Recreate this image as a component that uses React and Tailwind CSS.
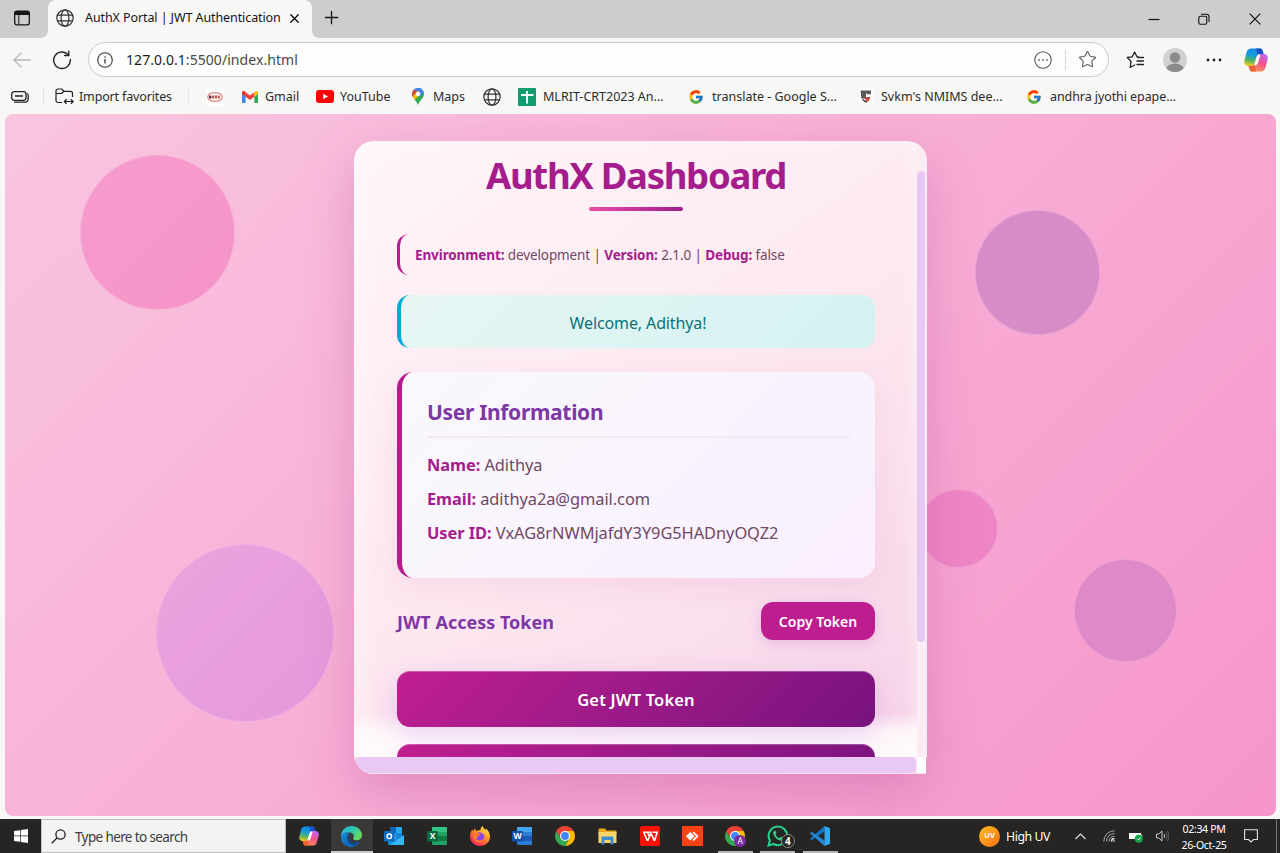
import React from "react";
import { Star, X, Plus } from "lucide-react";
import { FcGoogle } from "react-icons/fc";

/* ---------- icons ---------- */

function GlobeIcon() {
  return (
    <svg viewBox="0 0 18 18" className="size-[18px] shrink-0" fill="none" stroke="#333" strokeWidth="1.200">
      <circle cx="9" cy="9" r="8.200" />
      <ellipse cx="9" cy="9" rx="3.900" ry="8.200" />
      <path d="M1.400 6.200h15.200M1.400 11.800h15.200" />
    </svg>
  );
}

function ReloadIcon() {
  return (
    <svg viewBox="0 0 20 20" className="ml-[21px] size-[20px]" fill="none" stroke="#242424" strokeWidth="1.400" strokeLinecap="round" strokeLinejoin="round">
      <path d="M18.300 9.500A8.300 8.300 0 1 1 16.300 4.800" />
      <path d="M16.800 1.200v4.300h-4.300" />
    </svg>
  );
}

function CopilotIcon({ className }) {
  return (
    <svg viewBox="0 0 24 24" className={className}>
      <defs>
        <linearGradient id="cpA" x1="0.5" y1="0" x2="0.3" y2="1">
          <stop offset="0" stopColor="#1488ee" />
          <stop offset="0.4" stopColor="#159fd8" />
          <stop offset="0.7" stopColor="#5bb55d" />
          <stop offset="1" stopColor="#f2cc1c" />
        </linearGradient>
        <linearGradient id="cpB" x1="0.7" y1="0" x2="0.3" y2="1">
          <stop offset="0" stopColor="#c068f0" />
          <stop offset="0.45" stopColor="#f0508c" />
          <stop offset="1" stopColor="#ff9850" />
        </linearGradient>
      </defs>
      <path d="M12.500 .5h3.600c1.300 0 2 .8 2.400 2L19.500 6h-3c-1.500 0-2.300.8-2.800 2.300L11.500 15.500c-.5 1.600-1.300 2.500-3 2.500H4.500C1.300 18-.3 15.800.4 12.700L2.500 4.500C3.300 1.800 4.700.5 7.300.5z" fill="url(#cpA)" />
      <path d="M12 .5h4.200c1.300 0 2 .8 2.400 2l1 3.500H16c-1.200 0-1.700.5-2.300 1.600z" fill="#1c51c9" />
      <path d="M11.500 23.500H8c-1.300 0-2-.8-2.400-2L4.500 18h3.300c1.500 0 2.400-.8 2.900-2.300L12.900 8.500c.5-1.600 1.300-2.500 3-2.500h3.700c3.200 0 4.700 2.200 4 5.300l-2.100 8.200c-.8 2.700-2.200 4-4.800 4z" fill="url(#cpB)" />
      <path d="M12 23.500H8c-1.300 0-2-.8-2.400-2L4.500 18h3.300c1.500 0 2.400-.8 2.900-2.300z" fill="#f2603c" />
      <path d="M13.300 8.200c.3-.9.7-1.200 1.500-1.200h.9c-.6 3-1.600 6.300-2.600 8.800-.3.900-.8 1.200-1.600 1.200h-1z" fill="#fff" stroke="#fff" strokeWidth="1" strokeLinejoin="round" />
    </svg>
  );
}

function GmailIcon() {
  return (
    <svg viewBox="0 0 16 12" className="h-[12px] w-[16px]">
      <path d="M0 2.500V11c0 .6.400 1 1 1h2.600V5.400z" fill="#4285f4" />
      <path d="M16 2.500V11c0 .6-.4 1-1 1h-2.600V5.400z" fill="#34a853" />
      <path d="M3.600 1.200 8 4.500l4.400-3.300v4.600L8 9.100 3.600 5.800z" fill="#ea4335" />
      <path d="M12.400 1.200v4.600L16 3.100V1.900c0-1.700-1.800-2.500-3-1.500z" fill="#fbbc04" />
      <path d="M3.600 1.200v4.600L0 3.100V1.900C0 .2 1.800-.6 3 .4z" fill="#dc3226" />
    </svg>
  );
}

function YouTubeIcon() {
  return (
    <svg viewBox="0 0 18 13" className="h-[13px] w-[18px]">
      <rect width="18" height="13" rx="3" fill="#f00" />
      <path d="M7.200 3.700v5.600L12 6.500z" fill="#fff" />
    </svg>
  );
}

function MapsIcon() {
  return (
    <svg viewBox="0 0 12 17" className="h-[17px] w-[12px]">
      <path d="M6 0a6 6 0 0 0-6 6c0 4 4 5.500 6 11 2-5.500 6-7 6-11a6 6 0 0 0-6-6z" fill="#34a853" />
      <path d="M6 0a6 6 0 0 0-4.600 2.200L6 6 9.900.9A6 6 0 0 0 6 0z" fill="#4285f4" />
      <path d="M1.400 2.200A6 6 0 0 0 0 6c0 1 .2 1.800.6 2.500L6 2.900z" fill="#ea4335" />
      <path d="M.6 8.500C1 9.700 1.900 10.600 2.800 11.700L9 5 6 3z" fill="#fbbc04" />
      <path d="M9.900 1.400 5 7l3 1.500 3.800-4.300A6 6 0 0 0 9.900 1.400z" fill="#4285f4" />
      <circle cx="6" cy="6" r="2.200" fill="#fff" />
    </svg>
  );
}

function BadgeIcon() {
  return (
    <svg viewBox="0 0 18 18" className="size-[18px]">
      <rect width="18" height="18" rx="2" fill="#fff" />
      <ellipse cx="9" cy="9" rx="7.300" ry="4.400" fill="#fff" stroke="#e08a85" strokeWidth="1.300" />
      <path d="M3 9h11.500" stroke="#d8554f" strokeWidth="3" strokeDasharray="2.200 .7" />
      <circle cx="4.200" cy="9" r="1.300" fill="#453a5c" />
    </svg>
  );
}

function SheetsIcon() {
  return (
    <svg viewBox="0 0 18 18" className="size-[18px]">
      <rect width="18" height="18" rx="1" fill="#0f9d6b" />
      <path d="M9 3v12.500M3 7h12.500" stroke="#fff" strokeWidth="2" />
    </svg>
  );
}

function NmimsIcon() {
  return (
    <svg viewBox="0 0 14 15" className="h-[15px] w-[14px]">
      <rect width="14" height="15" rx="2" fill="#fff" />
      <path d="M1.500 1.500h10.500v3.800H8V4.500H7V8h4v1.500H2.300z" fill="#58595b" />
      <path d="M4.500 8.500H11c0 2.500-1.500 4-4 5.200V11z" fill="#d8453f" />
      <path d="M3 9.500l5 3.200-1 .9c-2-.6-3.700-2-4-4.100z" fill="#333" />
    </svg>
  );
}

function EdgeIcon() {
  return (
    <svg viewBox="0 0 24 24" className="size-[21px]">
      <defs>
        <linearGradient id="edA" x1="0" y1="0" x2="1" y2="0.5">
          <stop offset="0" stopColor="#2bb5e8" />
          <stop offset="0.55" stopColor="#2cc6b0" />
          <stop offset="1" stopColor="#66d85f" />
        </linearGradient>
        <linearGradient id="edB" x1="0" y1="0" x2="0.6" y2="1">
          <stop offset="0" stopColor="#1c91df" />
          <stop offset="1" stopColor="#0c5cab" />
        </linearGradient>
      </defs>
      <path d="M0 12C0 5 5.200 0 12 0s12 5.200 12 10.300c0 4-3 6-6.300 6-2.600 0-4-1.200-4-2 0-.6 1-1.100 1-3 0-2.200-2-4-4.900-4C5 7.300 0 10 0 14z" fill="url(#edA)" />
      <path d="M0 13c0-4.500 4-6.600 8.500-5.700C5.500 8.600 4.500 19.600 13 23.900 5.500 24.500 0 19.500 0 13z" fill="url(#edB)" />
      <path d="M9.800 8.200C4.500 12 7 22 14.500 22c3 0 5.500-1.400 7.600-4.200-1.900 3.900-5.700 6.200-9.600 6.200C6 23.500 2.500 13 8.700 8z" fill="#1577c8" />
      <path d="M9.700 9.500C6.500 16 13 21 20 17.800c1.200-.5 2.300-.5 1.700.6C17.500 24.500 10 23.500 7.500 18 6.200 15 7.300 11.200 9.700 9.500z" fill="#114a8b" />
    </svg>
  );
}

function OfficeIcon({ letter, back, mid, light, dark }) {
  return (
    <svg viewBox="0 0 20 18" className="h-[18px] w-[20px]">
      <rect x="5" y="0" width="15" height="18" rx="1.300" fill={back} />
      <rect x="5" y="0" width="15" height="5" rx="1" fill={light} />
      <rect x="5" y="9" width="15" height="5" fill={mid} />
      <rect x="0" y="4" width="11" height="10.500" rx="1" fill={dark} />
      <text x="5.500" y="12.300" textAnchor="middle" fontSize="8.500" fontWeight="700" fill="#fff" fontFamily="Open Sans, sans-serif">{letter}</text>
    </svg>
  );
}

function OutlookIcon() {
  return (
    <svg viewBox="0 0 20 18" className="h-[18px] w-[20px]">
      <rect x="6" y="0" width="12" height="13" rx="1" fill="#28a8ea" />
      <path d="M6 0h6v6H6z" fill="#0364b8" />
      <path d="M12 6h6v6h-6z" fill="#1a84d4" />
      <path d="M4 8l8 5 8-5v9c0 .6-.4 1-1 1H5c-.6 0-1-.4-1-1z" fill="#1490df" />
      <path d="M20 8v9c0 .6-.4 1-1 1H6z" fill="#36b7f2" />
      <rect x="0" y="4" width="10.500" height="10.500" rx="1" fill="#0f6cbd" />
      <circle cx="5.300" cy="9.300" r="2.300" fill="none" stroke="#fff" strokeWidth="1.400" />
    </svg>
  );
}

function FirefoxIcon() {
  return (
    <svg viewBox="0 0 20 20" className="size-[20px]">
      <defs>
        <linearGradient id="ffx" x1="0.85" y1="0.05" x2="0.2" y2="1">
          <stop offset="0" stopColor="#ffe84a" />
          <stop offset="0.4" stopColor="#ff9a28" />
          <stop offset="0.75" stopColor="#ff4640" />
          <stop offset="1" stopColor="#e3246c" />
        </linearGradient>
      </defs>
      <path d="M12.800 0c.2 2 1.700 3 3 4 .1-.8 0-1.300-.2-1.800C18.400 4 20 7.500 20 10.500 20 16 15.500 20 10 20S0 15.800 0 10.500C0 7.500 1 5.300 2.500 3.500l.7 2 1.600-3 1.500 2.400c1.500-.8 3-.7 4.200-.6C10.300 2.500 11.300.9 12.800 0z" fill="url(#ffx)" />
      <circle cx="9.800" cy="10.800" r="4.500" fill="#8a45e8" />
      <path d="M4 7.500c1.500-1.300 3.500-1 4.300 0l2.700.3c-.3 1.400-2 1.500-3 2 0 1.500-.8 2.200-2 2.500C7 15 11 15.500 14 12.500c-.7 3.500-4.500 4.800-7.500 3.300C3.500 14.500 2.500 10.500 4 7.500z" fill="#ff7b2e" />
      <path d="M9.500 5.500c3-1 5.700 1.300 6 4.500L13 7.500z" fill="#ffb82e" />
    </svg>
  );
}

function ChromeIcon() {
  return (
    <svg viewBox="0 0 20 20" className="size-[20px]">
      <path d="M10 5h8.660A10 10 0 0 1 10 20l4.330-7.500z" fill="#fbbc04" />
      <path d="M14.330 12.500 10 20A10 10 0 0 1 1.340 5l4.330 7.500z" fill="#34a853" />
      <path d="M5.670 12.500 1.340 5A10 10 0 0 1 18.660 5H10z" fill="#ea4335" />
      <circle cx="10" cy="10" r="5" fill="#fff" />
      <circle cx="10" cy="10" r="3.900" fill="#4285f4" />
    </svg>
  );
}

function FolderIcon() {
  return (
    <svg viewBox="0 0 19 17" className="h-[17px] w-[19px]">
      <path d="M.5 1.500C.5.900.9.5 1.500.5H7l1.500 2h9c.6 0 1 .4 1 1V6H.5z" fill="#e8a91c" />
      <path d="M.5 4h18v11H.5z" fill="#fbd568" />
      <path d="M3.500 16.500V9.500c0-.6.400-1 1-1h10c.6 0 1 .4 1 1v7h-3v-4.500h-6v4.500z" fill="#3b8ed4" />
    </svg>
  );
}

function WpsIcon() {
  return (
    <svg viewBox="0 0 20 20" className="size-[20px]">
      <rect width="20" height="20" rx="2" fill="#fb1207" />
      <path d="M3 6.200h8M3.700 6.200l3.500 8h.8l3-7.200 3 7.200h.7l2.500-8H12.500M7.500 6.200l2 4.500" fill="none" stroke="#fff" strokeWidth="1.600" />
    </svg>
  );
}

function AnyDeskIcon() {
  return (
    <svg viewBox="0 0 21 20" className="h-[20px] w-[21px]">
      <rect width="21" height="20" fill="#fb4216" />
      <path d="M4 10.300 8.200 6l4.200 4.300-4.200 4.200z" fill="#fff" />
      <path d="M11 6.200l4.300 4.100-4.300 4.200" fill="none" stroke="#fff" strokeWidth="1.800" />
    </svg>
  );
}

function WhatsAppIcon() {
  return (
    <svg viewBox="0 0 22 22" className="size-[22px]">
      <path d="M1.500 20.500l1.400-5A9.300 9.300 0 1 1 6.500 19z" fill="none" stroke="#25d38a" strokeWidth="2" />
      <path d="M7.500 5.800c-.8.400-1.400 1.300-1.200 2.600.5 3.200 4 6.700 7.300 7 1.300.1 2.500-.8 2.700-2.200l-2.600-1.400-1.300 1.400c-1.800-.6-3.200-2-3.900-3.700l1-1.200-1.100-2.500z" fill="#25d38a" />
    </svg>
  );
}

function VsCodeIcon() {
  return (
    <svg viewBox="0 0 20 20" className="size-[20px]">
      <path d="M1.500 14.200 0 12.800 14.500 0v5.500z" fill="#1076c0" />
      <path d="M1.500 5.800 0 7.200 14.500 20v-5.500z" fill="#2189d6" />
      <path d="M14.500 0 20 2.300v15.400L14.500 20z" fill="#31a8f2" />
    </svg>
  );
}

/* ---------- browser chrome ---------- */

function TabStrip() {
  return (
    <div className="flex h-[38px] items-end bg-[#cdcdcb]">
      <div className="flex h-full w-[48px] shrink-0 items-center justify-center rounded-br-lg pr-1">
        <svg viewBox="0 0 16 16" className="mt-[-2px] size-4">
          <rect x="0.700" y="1.200" width="14.600" height="13.600" rx="2" fill="none" stroke="#161616" strokeWidth="1.300" />
          <path d="M.7 2.800C.7 1.900 1.400 1 2.500 1h11c1.100 0 1.800.9 1.800 1.800V5H.7z" fill="#161616" />
          <path d="M4.800 5v9.500" stroke="#161616" strokeWidth="1" />
        </svg>
      </div>
      <div className="-ml-2 flex h-full items-end">
        <svg viewBox="0 0 8 8" className="size-2"><path d="M8 0v8H0c5 0 8-3 8-8z" fill="#f7f7f6" /></svg>
      </div>
      <div className="flex h-full w-[264px] items-center rounded-t-lg bg-[#f7f7f6] pb-[2px] pl-2">
        <GlobeIcon />
        <span className="ml-[11px] w-[198px] whitespace-nowrap text-[12.500px] tracking-[-0.090px] text-[#151515]">AuthX Portal | JWT Authentication</span>
        <X className="ml-[4px] size-[15px] text-black" strokeWidth={2} />
      </div>
      <svg viewBox="0 0 8 8" className="size-2"><path d="M0 0v8h8C3 8 0 5 0 0z" fill="#f7f7f6" /></svg>
      <div className="flex h-full grow items-center pb-[3px]">
        <Plus className="ml-[1px] size-[21px] text-[#161616]" strokeWidth={1.500} />
        <svg viewBox="0 0 12 12" className="ml-auto mt-[2px] size-3"><path d="M.5 6.500h11" stroke="#111" strokeWidth="1.200" /></svg>
        <svg viewBox="0 0 12 12" className="ml-[38px] mt-[2px] size-3" fill="none" stroke="#111" strokeWidth="1.100">
          <rect x="0.800" y="3.200" width="8" height="8" rx="1.500" />
          <path d="M3 1.200h5.500c1.600 0 2.500.9 2.500 2.500V9" />
        </svg>
        <svg viewBox="0 0 12 12" className="ml-[39px] mr-[19px] mt-[2px] size-3"><path d="M.7.7l10.600 10.600M11.300.7.700 11.300" stroke="#111" strokeWidth="1.200" /></svg>
      </div>
    </div>
  );
}

function AddressBar() {
  return (
    <div className="flex h-[41px] items-center bg-[#f7f7f6] pt-[2px]">
      <svg viewBox="0 0 18 16" className="ml-[13px] h-4 w-[18px]" fill="none" stroke="#b9b9b8" strokeWidth="1.300">
        <path d="M8.500.7 1 8l7.500 7.300M1 8h16.800" />
      </svg>
      <ReloadIcon />
      <div className="ml-[16px] flex h-[35px] w-[1021px] items-center rounded-full border border-[#cbcbc9] bg-[#fdfdfc] pl-[8px]">
        <svg viewBox="0 0 16 16" className="size-4" fill="none" stroke="#3b3b3b" strokeWidth="1.100">
          <circle cx="8" cy="8" r="7.300" />
          <path d="M8 7v4.500M8 4.300v1.500" strokeWidth="1.300" />
        </svg>
        <span className="ml-[13px] text-[14px] tracking-[0.060px] text-[#4a4a4a]"><span className="text-[#1d1d1d]">127.0.0.1</span>:5500/index.html</span>
        <svg viewBox="0 0 18 18" className="ml-auto size-[18px]">
          <circle cx="9" cy="9" r="8.200" fill="none" stroke="#555" strokeWidth="1.100" />
          <path d="M4.300 8.300h1.600v1.500H4.300zM8.200 8.300h1.600v1.500H8.200zM12.100 8.300h1.600v1.500h-1.600z" fill="#555" />
        </svg>
        <div className="ml-[13px] h-5 w-px bg-[#d5d5d3]" />
        <Star className="ml-[12px] mr-[11px] size-[19px] text-[#5a5a5a]" strokeWidth={1.350} />
      </div>
      <svg viewBox="0 0 20 18" className="ml-[17px] h-[18px] w-[20px]" fill="none" stroke="#222" strokeWidth="1.300" strokeLinejoin="round" strokeLinecap="round">
        <path d="M12.200 6 11 5.700 8.600 1 6.300 5.800 1.200 6.500 5 10.300 4.200 16.500 8.700 14" />
        <path d="M12 6.500h5.500M11 10h6.500M11 13.500h6.500" />
      </svg>
      <svg viewBox="0 0 24 24" className="ml-[17px] size-6">
        <clipPath id="av"><circle cx="12" cy="12" r="12" /></clipPath>
        <g clipPath="url(#av)">
          <rect width="24" height="24" fill="#d2d1cf" />
          <circle cx="12" cy="9.500" r="5.200" fill="#8d8b89" />
          <ellipse cx="12" cy="21.500" rx="9" ry="6" fill="#8d8b89" />
        </g>
      </svg>
      <svg viewBox="0 0 16 4" className="ml-[19px] h-1 w-4" fill="#222">
        <circle cx="2" cy="2" r="1.400" /><circle cx="8" cy="2" r="1.400" /><circle cx="14" cy="2" r="1.400" />
      </svg>
      <CopilotIcon className="ml-[22px] size-[24px]" />
    </div>
  );
}

function Bookmarks() {
  return (
    <div className="flex h-[35px] items-center bg-[#f7f7f6] text-[12.500px] text-[#2b2b2b] [&>span]:mt-[2px] [&>span]:whitespace-nowrap">
      <svg viewBox="0 0 18 12" className="ml-[11px] h-3 w-[18px]" fill="none" stroke="#222" strokeWidth="1.300">
        <rect x="0.700" y="0.700" width="14.300" height="8.600" rx="2.500" />
        <path d="M4 5h8M3 11.200h10.500c2.500 0 3.700-1.300 3.700-3.500V4.500c0-1-.4-1.700-1-2" />
      </svg>
      <div className="ml-[14px] h-[17px] w-px bg-[#e2e2e0]" />
      <svg viewBox="0 0 19 17" className="ml-[11px] h-[17px] w-[19px]" fill="none" stroke="#222" strokeWidth="1.200" strokeLinejoin="round">
        <path d="M7 14.500H3A2 2 0 0 1 1 12.500V3a2 2 0 0 1 2-2h3.500L9 3.300h6.500A2 2 0 0 1 17.500 5.300V9M1 5.500h5.500L9 3.300" />
        <path d="M9.500 13.500h8.500M11.700 11.200 9.300 13.500l2.400 2.300M15.800 11.200l2.400 2.300-2.400 2.300" />
      </svg>
      <span className="ml-[5px] w-[93px] tracking-[-0.150px]">Import favorites</span>
      <div className="ml-[16px] h-[17px] w-px bg-[#e8e8e6]" />
      <div className="ml-[17px]"><BadgeIcon /></div>
      <div className="ml-[18px]"><GmailIcon /></div>
      <span className="ml-[7px] w-[35px]">Gmail</span>
      <div className="ml-[16px]"><YouTubeIcon /></div>
      <span className="ml-[6px] w-[52px]">YouTube</span>
      <div className="ml-[20px]"><MapsIcon /></div>
      <span className="ml-[9px] w-[32px]">Maps</span>
      <div className="ml-[18px]"><GlobeIcon /></div>
      <div className="ml-[17px]"><SheetsIcon /></div>
      <span className="ml-[7px] w-[122px]">MLRIT-CRT2023 An...</span>
      <FcGoogle className="ml-[23px] size-[16px]" />
      <span className="ml-[8px] w-[125px]">translate - Google S...</span>
      <div className="ml-[22px]"><NmimsIcon /></div>
      <span className="ml-[8px] w-[122px]">Svkm's NMIMS dee...</span>
      <FcGoogle className="ml-[23px] size-[16px]" />
      <span className="ml-[8px] w-[130px] tracking-[-0.080px]">andhra jyothi epape...</span>
    </div>
  );
}

/* ---------- page ---------- */

function Bubble({ className }) {
  return <div className={"absolute rounded-full border border-white/20 " + className} />;
}

function Label({ children }) {
  return <b className="font-bold text-[#a51c8c]">{children}</b>;
}

function Dashboard() {
  return (
    <div className="relative ml-[349px] mt-[27px] flex h-[633px] w-[573px] flex-col overflow-hidden rounded-[20px] rounded-br-none border-t border-white/60 bg-linear-145 from-[#fff6fa] via-[#fde8f0] to-[#f6d2e8]">
      <div className="flex h-[615px] shrink-0">
        <div className="relative h-full w-[563px] overflow-hidden bg-[linear-gradient(to_top,#fffafb_0,#fffafbe0_26px,transparent_44px)] pl-[43px] pr-[42px] shadow-[inset_9px_0_18px_#ffffff66,inset_-6px_0_12px_#ffffff44]">
          <h1 className="mt-[8px] whitespace-nowrap text-center text-[36.500px] font-bold leading-[50px] tracking-[-1.300px] text-[#a51c8c]">AuthX Dashboard</h1>
          <div className="mx-auto mt-[7px] h-1 w-[94px] rounded bg-linear-to-r from-[#ea4aa5] to-[#a01c8c]" />
          <div className="mt-[23px] flex h-[41px] items-center rounded-[12px] border-l-[3px] border-[#b51d8c] pl-[15px] pt-[2px]">
            <p className="whitespace-nowrap text-[13.500px] tracking-[-0.110px] text-[#704864]"><Label>Environment:</Label> development | <Label>Version:</Label> 2.1.0 | <Label>Debug:</Label> false</p>
          </div>
          <div className="mt-[20px] flex h-[53px] items-center justify-center rounded-[13px] border-l-4 border-[#08a9d6] bg-linear-135 from-[#e6f6f3] to-[#d4f2f2] pt-[2px] text-[16px] text-[#0b7277]">
            <span className="tracking-[-0.120px]">Welcome, Adithya!</span>
          </div>
          <section className="mt-[24px] h-[206px] rounded-[16px] border-l-[5px] border-[#b51d8c] bg-linear-135 from-[#f9f8fc] to-[#faefff] pl-[25px] pr-[24px] pt-[25px] shadow-[0_8px_30px_#c050a01a]">
            <h2 className="border-b-2 border-[#f3e9f2] pb-[8px] text-[21px] font-bold leading-[31px] tracking-[-0.330px] text-[#7d38a5]">User Information</h2>
            <div className="mt-[10px] text-[16.400px] leading-[34px] tracking-[-0.060px] text-[#704864]">
              <p><Label>Name:</Label> Adithya</p>
              <p><Label>Email:</Label> adithya2a@gmail.com</p>
              <p><Label>User ID:</Label> VxAG8rNWMjafdY3Y9G5HADnyOQZ2</p>
            </div>
          </section>
          <div className="mt-[24px] flex h-[38px] items-center justify-between">
            <h3 className="pt-[2px] text-[18px] font-bold text-[#7d38a5]">JWT Access Token</h3>
            <button className="h-[38px] w-[114px] rounded-[12px] bg-[#be1d8f] pt-px text-[14px] font-semibold text-white shadow-[0_4px_14px_#b040c033]">Copy Token</button>
          </div>
          <button className="mt-[31px] block h-[56px] w-full rounded-[13px] bg-linear-135 from-[#c01e90] to-[#78127e] pt-[2px] text-[16.500px] font-semibold tracking-[0.170px] text-white shadow-[0_8px_28px_#a040e033,inset_0_1px_0_#ffffff40]">Get JWT Token</button>
          <div className="mt-[17px] h-[56px] rounded-[13px] bg-linear-135 from-[#c01e90] to-[#78127e] shadow-[inset_0_1px_0_#ffffff40]" />
        </div>
        <div className="flex h-full w-[10px] flex-col bg-[#fdecf3] pt-[29px]">
          <div className="h-[471px] w-[8px] rounded bg-[#e8c8f2]" />
        </div>
      </div>
      <div className="flex h-[17px] bg-[#fbe2f3]">
        <div className="ml-px h-4 w-[561px] rounded-[5px] bg-[#e9c8f3]" />
        <div className="ml-px h-4 w-[9px] bg-white" />
        <div className="h-full w-px bg-[#ec9bcb]" />
      </div>
    </div>
  );
}

function Page() {
  return (
    <div className="h-[705px] bg-[#f7f7f6] pl-[5px] pr-[4px]">
      <main className="relative flow-root h-[702px] w-[1271px] overflow-hidden rounded-lg bg-linear-135 from-[#f9c5e0] to-[#f695ca]">
        <Bubble className="left-[75px] top-[41px] size-[155px] bg-linear-135 from-[#f69ccd] to-[#f593c7]" />
        <Bubble className="left-[970px] top-[96px] size-[125px] bg-[#d88bc7]" />
        <Bubble className="left-[151px] top-[430px] size-[178px] bg-linear-135 from-[#eba4dd] to-[#e598dc]" />
        <Bubble className="left-[914px] top-[375px] size-[79px] bg-[#ee86c5]" />
        <Bubble className="left-[1069px] top-[445px] size-[103px] bg-[#df89c8]" />
        <div className="absolute left-[349px] top-[27px] h-[633px] w-[573px] rounded-[20px] shadow-[0_18px_50px_#a8408c4a]" />
        <Dashboard />
      </main>
    </div>
  );
}

/* ---------- taskbar ---------- */

function AppSlot({ children, active, running }) {
  return (
    <div className={"flex h-full w-[42.600px] flex-col items-center justify-end " + (active ? "bg-[#3a3937]" : "")}>
      <div className="flex grow items-center justify-center pt-[2px]">{children}</div>
      <div className={"h-[2px] " + (active ? "w-full bg-[#c9c9c8]" : running ? "w-[35px] bg-[#b5b5b4]" : "w-0")} />
    </div>
  );
}

function Taskbar() {
  return (
    <footer className="flex h-[34px] items-center bg-[#262523] text-white">
      <div className="flex w-[41px] justify-center">
        <svg viewBox="0 0 14 14" className="size-[14px]" fill="#fff"><path d="M0 2 6 1.200v5.400H0zM6.700 1 14 0v6.600H6.700zM0 7.300h6v5.500L0 12zM6.700 7.300H14V14l-7.300-1z" /></svg>
      </div>
      <div className="flex h-full w-[245px] items-center border border-[#bdbdbb] bg-[#f3f3f2]">
        <svg viewBox="0 0 15 15" className="ml-[9px] size-[15px]" fill="none" stroke="#222" strokeWidth="1.300"><circle cx="9.500" cy="5.500" r="4.600" /><path d="M6.200 8.800.7 14.300" /></svg>
        <span className="ml-[9px] pt-[3px] text-[13.500px] tracking-[-0.620px] text-[#3c3c3c]">Type here to search</span>
      </div>
      <div className="ml-[2px] flex h-full">
        <AppSlot><CopilotIcon className="size-[20px]" /></AppSlot>
        <AppSlot active><EdgeIcon /></AppSlot>
        <AppSlot><OutlookIcon /></AppSlot>
        <AppSlot><OfficeIcon letter="X" back="#21a366" light="#33c481" mid="#107c41" dark="#0d6b3b" /></AppSlot>
        <AppSlot><FirefoxIcon /></AppSlot>
        <AppSlot><OfficeIcon letter="W" back="#2b7cd3" light="#41a5ee" mid="#185abd" dark="#1450a8" /></AppSlot>
        <AppSlot><ChromeIcon /></AppSlot>
        <AppSlot><FolderIcon /></AppSlot>
        <AppSlot><WpsIcon /></AppSlot>
        <AppSlot><AnyDeskIcon /></AppSlot>
        <AppSlot running>
          <div className="relative"><ChromeIcon />
            <span className="absolute left-[9px] top-[9px] flex size-[12px] items-center justify-center rounded-full bg-[#7b2a9e] text-[8px] leading-none">A</span>
          </div>
        </AppSlot>
        <AppSlot running>
          <div className="relative"><WhatsAppIcon />
            <span className="absolute left-[14px] top-[9px] flex size-[14px] items-center justify-center rounded-full border border-[#8a8a88] bg-[#262523] text-[10px] font-bold leading-none">4</span>
          </div>
        </AppSlot>
        <AppSlot running><VsCodeIcon /></AppSlot>
      </div>
      <div className="ml-auto flex size-[21px] items-center justify-center rounded-full bg-linear-135 from-[#fbbf24] to-[#f96a10] text-[7.500px] font-bold">UV</div>
      <span className="ml-[6px] w-[44px] whitespace-nowrap pt-[3px] text-[12.300px] tracking-[-0.450px]">High UV</span>
      <svg viewBox="0 0 11 7" className="ml-[25px] h-[7px] w-[11px]" fill="none" stroke="#ddd" strokeWidth="1.200"><path d="M.5 6 5.500 1l5 5" /></svg>
      <svg viewBox="0 0 12 12" className="ml-[17px] size-3" fill="none" stroke="#a5a5a4" strokeWidth="1">
        <path d="M.8 11.500A10.500 10.500 0 0 1 11.500.8M3.500 11.500a8 8 0 0 1 8-8M6 11.500a5.500 5.500 0 0 1 5.500-5.300" />
        <path d="M8.500 11.500a3 3 0 0 1 3-3" stroke="#eee" strokeWidth="1.300" /><circle cx="11" cy="11" r=".8" fill="#fff" stroke="none" />
      </svg>
      <svg viewBox="0 0 14 11" className="ml-[14px] mt-[2px] h-[11px] w-[14px]">
        <path d="M0 1h12v6H0z" fill="#fff" /><path d="M12 2.500h1.300v3H12z" fill="#ccc" />
        <circle cx="9.800" cy="6.700" r="4" fill="#15a34a" /><path d="M8.300 6.700l1.200 1.200 2-2.300" fill="none" stroke="#fff" />
      </svg>
      <svg viewBox="0 0 13 12" className="ml-[13px] h-3 w-[13px]" fill="none" stroke="#ccc" strokeWidth="1">
        <path d="M.5 4h2.300L6 1v10L2.800 8H.5zM8 4.200c.8 1 .8 2.600 0 3.600" /><path d="M9.800 2.500c1.700 2 1.700 5 0 7M11.300 1c2 3 2 7 0 10" stroke="#777" strokeWidth=".8" />
      </svg>
      <div className="ml-[12px] w-[46px] whitespace-nowrap pt-px text-center text-[10.600px] leading-[16px] tracking-[-0.350px]"><div>02:34 PM</div><div>26-Oct-25</div></div>
      <svg viewBox="0 0 14 14" className="ml-[17px] size-[14px]" fill="none" stroke="#e2e2e2" strokeWidth="1.100"><path d="M.6.8h12.800v9.700H9.500L7 13l-2.500-2.500H.6z" /></svg>
      <div className="ml-[18px] mr-[3px] h-full w-px bg-[#777]" />
    </footer>
  );
}

export default function App() {
  return (
    <div className="h-[853px] w-[1280px] overflow-hidden bg-[#f7f7f6] font-['Noto_Sans','Open_Sans',sans-serif]">
      <TabStrip />
      <AddressBar />
      <Bookmarks />
      <Page />
      <Taskbar />
    </div>
  );
}
